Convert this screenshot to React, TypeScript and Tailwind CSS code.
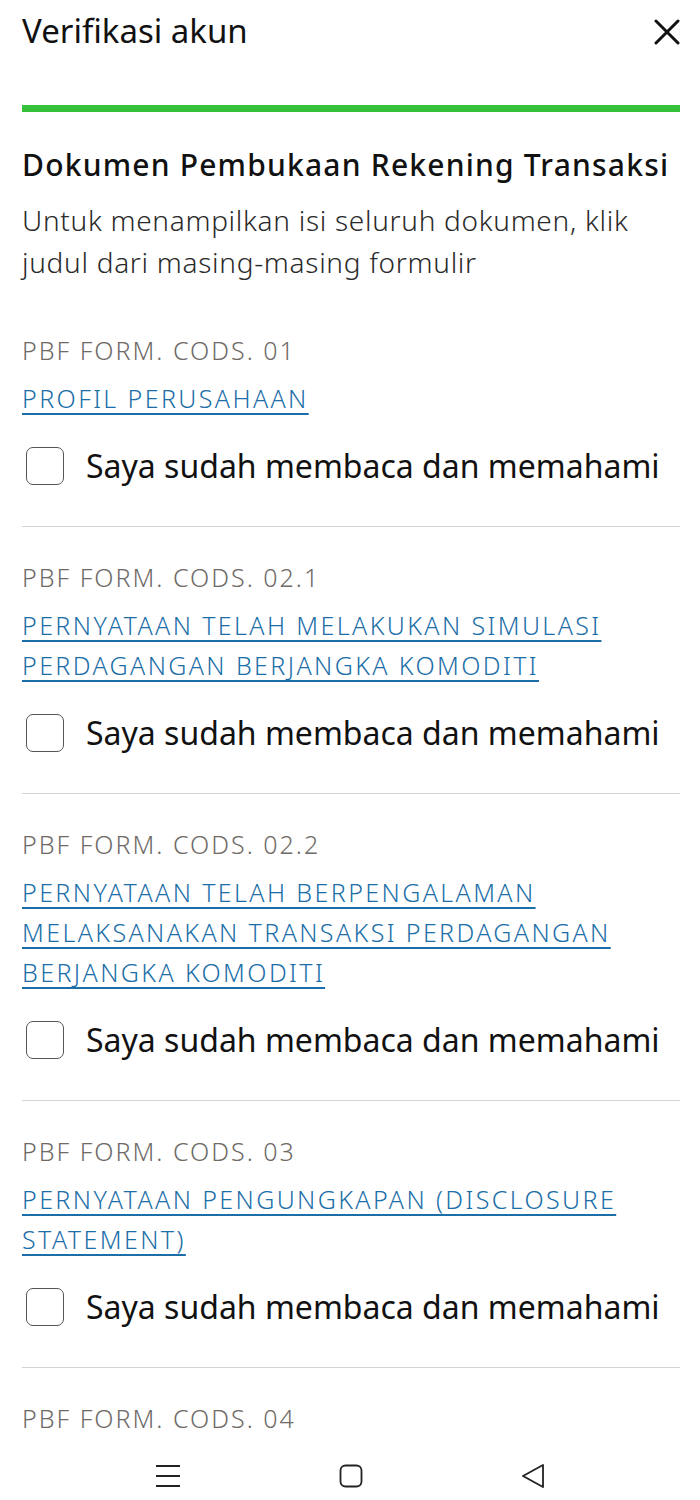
import { useState } from "react";

type Doc = { code: string; title: string[] };

const docs: Doc[] = [
  { code: "PBF FORM. CODS. 01", title: ["PROFIL PERUSAHAAN"] },
  {
    code: "PBF FORM. CODS. 02.1",
    title: ["PERNYATAAN TELAH MELAKUKAN SIMULASI", "PERDAGANGAN BERJANGKA KOMODITI"],
  },
  {
    code: "PBF FORM. CODS. 02.2",
    title: [
      "PERNYATAAN TELAH BERPENGALAMAN",
      "MELAKSANAKAN TRANSAKSI PERDAGANGAN",
      "BERJANGKA KOMODITI",
    ],
  },
  {
    code: "PBF FORM. CODS. 03",
    title: ["PERNYATAAN PENGUNGKAPAN (DISCLOSURE", "STATEMENT)"],
  },
];

function DocItem({ doc }: { doc: Doc }) {
  const [checked, setChecked] = useState(false);
  return (
    <div className="pt-[30px] pb-[40px] border-b border-[#d8d3cf]">
      <div className="text-[25px] leading-[40px] font-light tracking-[2px] text-[#6e6a67]">{doc.code}</div>
      <a
        href="#"
        className="block mt-[8px] text-[25px] leading-[40px] font-light tracking-[2.4px] text-[#1b6ea8] underline underline-offset-[5px] decoration-[1.5px]"
      >
        {doc.title.map((t) => (
          <span key={t} className="block">
            {t}
          </span>
        ))}
      </a>
      <label className="mt-[28px] flex items-center h-[40px] gap-[22px] cursor-pointer">
        <span
          onClick={() => setChecked(!checked)}
          className={
            "ml-[4px] w-[38px] h-[38px] rounded-[7px] border-[1.5px] border-[#555] " +
            (checked ? "bg-[#35c23a]" : "bg-white")
          }
        />
        <span className="text-[32px] leading-[40px] text-[#111]">Saya sudah membaca dan memahami</span>
      </label>
    </div>
  );
}

export default function App() {
  return (
    <div
      className="w-[700px] h-[1500px] flex flex-col bg-white overflow-hidden"
      style={{ fontFamily: '"Noto Sans", "Open Sans", sans-serif' }}
    >
      <div className="flex-1 overflow-hidden">
        <div className="h-[62px] pl-[22px] pr-[20px] flex items-center justify-between">
          <h1 className="text-[33px] font-normal text-[#111]">Verifikasi akun</h1>
          <svg width="26" height="26" viewBox="0 0 26 26" className="mt-[2px]">
            <path d="M2 2 L24 24 M24 2 L2 24" stroke="#111" strokeWidth="3" strokeLinecap="round" />
          </svg>
        </div>
        <div className="mt-[43px] ml-[22px] mr-[20px] h-[7px] bg-[#35c23a]" />
        <div className="pl-[22px] pr-[20px]">
          <h2 className="mt-[33px] text-[30px] leading-[40px] font-medium tracking-[1.2px] text-[#111] whitespace-nowrap">
            Dokumen Pembukaan Rekening Transaksi
          </h2>
          <p className="mt-[14px] text-[28px] leading-[42px] font-light tracking-[0.7px] text-[#2a2a2a]">
            Untuk menampilkan isi seluruh dokumen, klik
            <br />
            judul dari masing-masing formulir
          </p>
          <div className="mt-[17px]">
            {docs.map((d) => (
              <DocItem key={d.code} doc={d} />
            ))}
            <div className="pt-[30px] text-[25px] leading-[40px] font-light tracking-[2px] text-[#6e6a67]">
              PBF FORM. CODS. 04
            </div>
          </div>
        </div>
      </div>
      <div className="h-[46px] shrink-0 bg-white flex items-center justify-center gap-[158px] pb-[2px]">
        <svg width="26" height="26" viewBox="0 0 26 26">
          <path d="M1 3 H25 M1 13 H25 M1 23 H25" stroke="#222" strokeWidth="1.8" />
        </svg>
        <svg width="24" height="24" viewBox="0 0 24 24">
          <rect x="1.5" y="1.5" width="21" height="21" rx="5" fill="none" stroke="#222" strokeWidth="1.8" />
        </svg>
        <svg width="24" height="26" viewBox="0 0 24 26">
          <path d="M22 2 L2 13 L22 24 Z" fill="none" stroke="#222" strokeWidth="1.8" strokeLinejoin="round" />
        </svg>
      </div>
    </div>
  );
}
